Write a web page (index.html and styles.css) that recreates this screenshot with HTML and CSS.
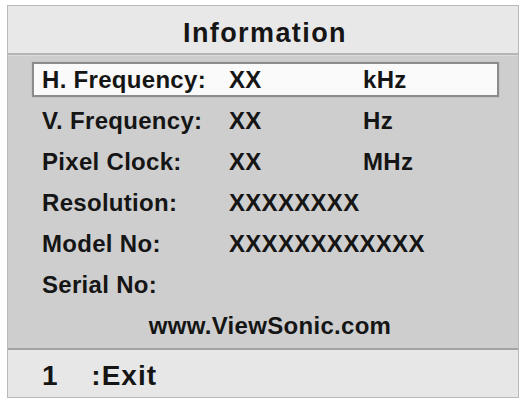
FILE: index.html
```html
<!DOCTYPE html>
<html lang="en">
<head>
<meta charset="utf-8">
<title>Information</title>
<link rel="stylesheet" href="styles.css">
</head>
<body>
  <div class="osd">
    <div class="osd-header">
      <h1 class="osd-title">Information</h1>
    </div>
    <div class="osd-body">
      <div class="info-row is-selected">
        <span class="info-label">H. Frequency:</span>
        <span class="info-value">XX</span>
        <span class="info-unit">kHz</span>
      </div>
      <div class="info-row">
        <span class="info-label">V. Frequency:</span>
        <span class="info-value">XX</span>
        <span class="info-unit">Hz</span>
      </div>
      <div class="info-row">
        <span class="info-label">Pixel Clock:</span>
        <span class="info-value">XX</span>
        <span class="info-unit">MHz</span>
      </div>
      <div class="info-row">
        <span class="info-label">Resolution:</span>
        <span class="info-value">XXXXXXXX</span>
      </div>
      <div class="info-row">
        <span class="info-label">Model No:</span>
        <span class="info-value">XXXXXXXXXXXX</span>
      </div>
      <div class="info-row">
        <span class="info-label">Serial No:</span>
      </div>
      <div class="osd-site">www.ViewSonic.com</div>
    </div>
    <div class="osd-footer">
      <span class="osd-hint">1 :Exit</span>
    </div>
  </div>
</body>
</html>
```

FILE: styles.css
```css
* {
  box-sizing: border-box;
}

html,
body {
  margin: 0;
  padding: 0;
  background: #ffffff;
}

body {
  font-family: "Liberation Sans", Arial, Helvetica, sans-serif;
  font-weight: bold;
  color: #151515;
}

/* on-screen display panel */
.osd {
  margin: 5px 0 0 7px;
  width: 512px;
  height: 393px;
  border: 1px solid #b9b9b9;
  display: flex;
  flex-direction: column;
}

.osd-header {
  height: 49px;
  background: #e8e8e8;
  border-bottom: 2px solid #b6b6b6;
  display: flex;
  align-items: center;
  justify-content: center;
  padding-top: 8px;
}

.osd-title {
  margin: 0 0 0 4px;
  font-size: 27px;
  letter-spacing: 1.4px;
  line-height: 1;
  font-weight: bold;
}

.osd-body {
  flex: 1;
  background: #cecece;
  border-top: 1px solid #dadada;
  display: flex;
  flex-direction: column;
  padding-top: 3px;
}

.info-row {
  height: 41px;
  display: grid;
  grid-template-columns: 187px 134px auto;
  align-items: center;
  padding-left: 34px;
  font-size: 24px;
  letter-spacing: 0.3px;
}

.info-row.is-selected {
  margin: 3px 19px 3px 24px;
  height: 35px;
  padding-left: 8px;
  background: #fafafa;
  border: 2px solid #8c8c8c;
  box-shadow: 0 0 1px #9a9a9a;
}

.osd-site {
  height: 41px;
  display: flex;
  align-items: center;
  justify-content: center;
  padding-left: 14px;
  font-size: 24px;
  letter-spacing: 0.3px;
}

.osd-footer {
  height: 49px;
  background: #e7e7e7;
  border-top: 2px solid #a3a3a3;
  display: flex;
  align-items: center;
  padding: 4px 0 0 34px;
}

.osd-hint {
  font-size: 28px;
  letter-spacing: 1px;
  word-spacing: 24px;
  line-height: 1;
}
```
